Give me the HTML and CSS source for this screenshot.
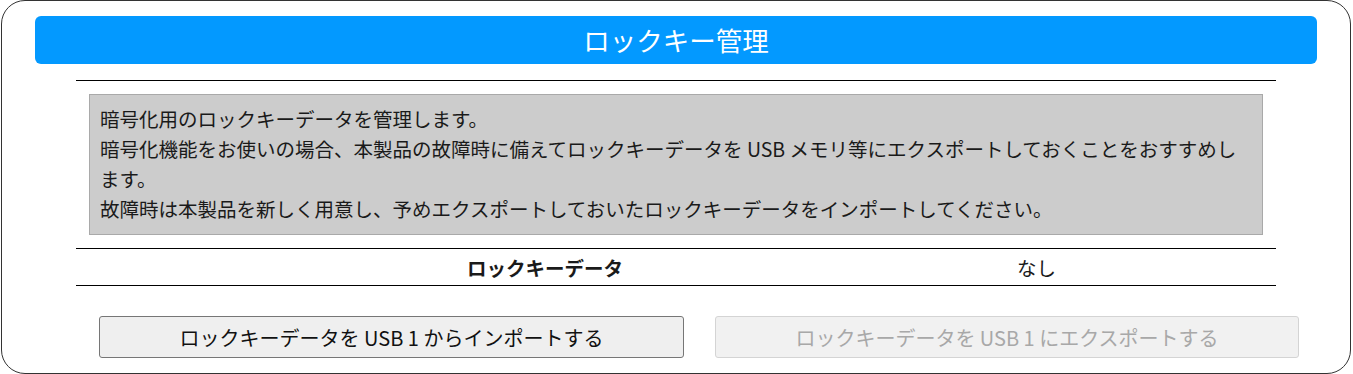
FILE: index.html
```html
<!DOCTYPE html>
<html lang="ja">
<head>
    <meta charset="UTF-8">
    <meta name="viewport" content="width=device-width, initial-scale=1.0">
    <title>ロックキー管理</title>
    <link rel="stylesheet" href="styles.css">
</head>
<body>
    <div class="panel">
        <h1 class="panel-title">ロックキー管理</h1>

        <div class="inner">
            <div class="note">
                暗号化用のロックキーデータを管理します。<br>
                暗号化機能をお使いの場合、本製品の故障時に備えてロックキーデータを USB メモリ等にエクスポートしておくことをおすすめします。<br>
                故障時は本製品を新しく用意し、予めエクスポートしておいたロックキーデータをインポートしてください。
            </div>

            <table class="info">
                <tr>
                    <th>ロックキーデータ</th>
                    <td>なし</td>
                </tr>
            </table>
        </div>

        <div class="actions">
            <button class="btn">ロックキーデータを USB 1 からインポートする</button>
            <button class="btn" disabled>ロックキーデータを USB 1 にエクスポートする</button>
        </div>
    </div>
</body>
</html>
```

FILE: styles.css
```css
body {
    margin: 0;
    font-family: "Noto Sans CJK JP", "Noto Sans", sans-serif;
    color: #1a1a1a;
    background-color: #fff;
}
.panel {
    box-sizing: border-box;
    width: 1350px;
    height: 374px;
    margin: 0 0 0 1px;
    padding: 15px 33px 0 33px;
    border: 1px solid #333;
    border-radius: 24px;
}
.panel-title {
    margin: 0;
    height: 48px;
    line-height: 48px;
    background-color: #0399ff;
    color: #fff;
    border-radius: 6px;
    text-align: center;
    font-size: 26.5px;
    font-weight: normal;
}
.inner {
    width: 1200px;
    margin: 16px auto 0;
    border-top: 1px solid #000;
}
.note {
    margin: 13px 13px 0;
    padding: 9px 10px 10px;
    background-color: #cccccc;
    border: 1px solid #a9a9a9;
    font-size: 19.5px;
    line-height: 30px;
}
.info {
    width: 100%;
    margin-top: 13px;
    border-collapse: collapse;
    font-size: 19.5px;
}
.info th,
.info td {
    height: 36px;
    padding: 0;
    border-top: 1px solid #000;
    border-bottom: 1px solid #000;
}
.info th {
    width: 938px;
    text-align: center;
}
.info td {
    padding-left: 3px;
    text-align: left;
}
.actions {
    display: flex;
    gap: 31px;
    margin: 30px 0 0 64px;
}
.btn {
    width: 585px;
    height: 42px;
    padding: 0;
    background-color: #efefef;
    border: 1px solid #767676;
    border-radius: 3px;
    color: #111;
    font-family: "Noto Sans CJK JP", "Noto Sans", sans-serif;
    font-size: 20px;
    cursor: pointer;
}
.btn:disabled {
    width: 584px;
    background-color: #f1f1f1;
    border-color: #d4d4d4;
    color: #a8a8a8;
    cursor: default;
}
```
